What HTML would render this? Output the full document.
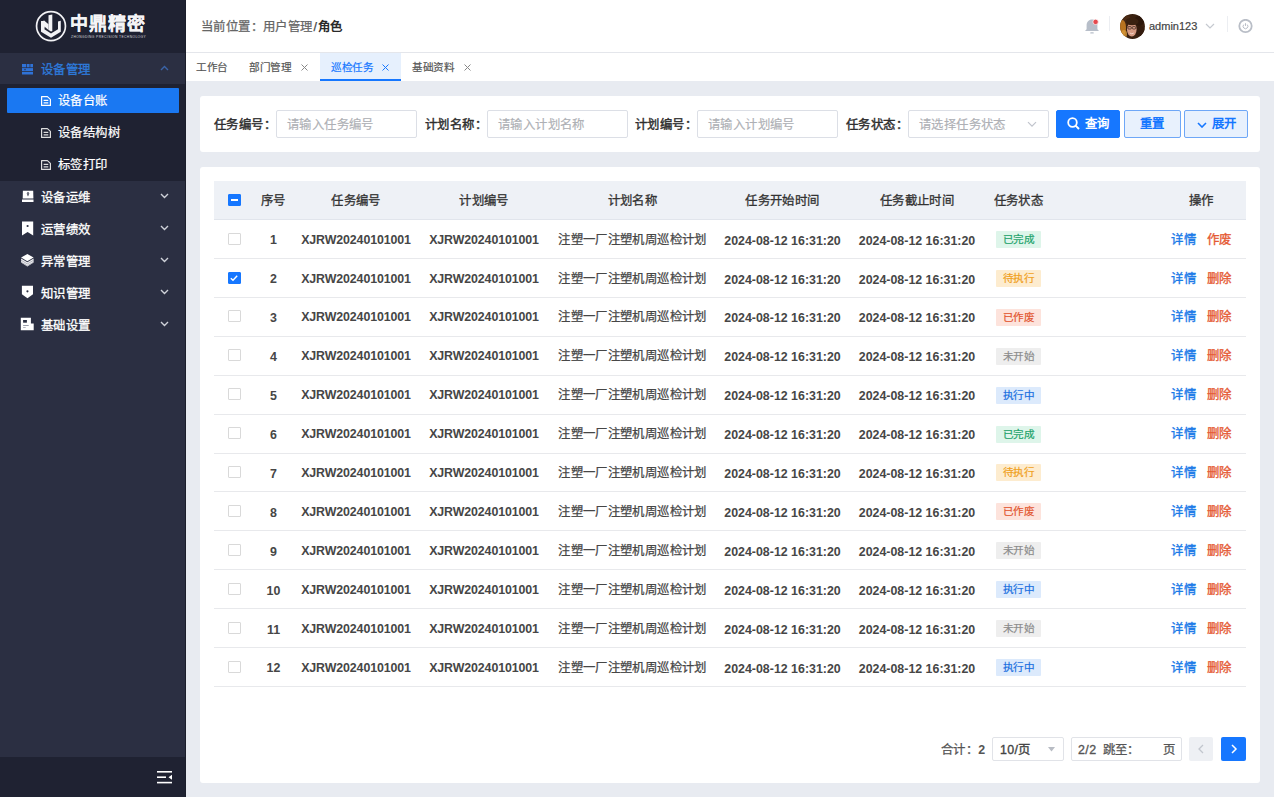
<!DOCTYPE html>
<html lang="zh-CN">
<head>
<meta charset="utf-8">
<style>
*{margin:0;padding:0;box-sizing:border-box}
html,body{width:1274px;height:797px;overflow:hidden;background:#e8ebf1;font-family:"Liberation Sans",sans-serif;font-size:12.4px;color:#333}
.ls{letter-spacing:0.38px}
.abs{position:absolute}
.med{-webkit-text-stroke:0.25px currentColor}
#side{position:absolute;left:0;top:0;width:186px;height:797px;background:#2b2f42}
#logo{position:absolute;left:0;top:0;width:186px;height:53px;background:#1f2232}
#sub{position:absolute;left:0;top:84px;width:186px;height:97px;background:#1f2232}
#sbot{position:absolute;left:0;top:757px;width:186px;height:40px;background:#1f2232}
.mi{position:absolute;left:0;width:186px;height:32px;line-height:32px;color:#fff;font-size:12.4px}
.mi .t{position:absolute;left:41px;top:1px;letter-spacing:0.38px;-webkit-text-stroke:0.3px currentColor}
.mi .ic{position:absolute;left:21px;top:10px;width:12px;height:12px}
.mi .ch{position:absolute;left:160px;top:12px;width:9px;height:6px}
.si{position:absolute;left:0;width:186px;height:25px;line-height:25px;color:#fff}
.si .t{position:absolute;left:58px;top:1px;letter-spacing:0.38px;-webkit-text-stroke:0.2px currentColor}
.si .ic{position:absolute;left:41px;top:8px;width:10px;height:10px}
#hdr{position:absolute;left:186px;top:0;width:1088px;height:53px;background:#fff;border-bottom:1px solid #e4e6eb}
#tabs{position:absolute;left:186px;top:53px;width:1088px;height:28px;background:#fff}
.tab{position:absolute;top:1px;height:27px;line-height:27px;font-size:10.6px;letter-spacing:-0.4px;color:#555;-webkit-text-stroke:0.2px currentColor;white-space:nowrap}
.card{position:absolute;background:#fff;border-radius:3px}
.lbl{position:absolute;top:111px;letter-spacing:0.38px;height:28px;line-height:28px;font-weight:400;color:#2e2e2e;-webkit-text-stroke:0.4px currentColor}
.inp{position:absolute;top:110px;letter-spacing:0.38px;height:28px;width:141px;border:1px solid #dcdfe6;border-radius:2px;line-height:28px;padding-left:10px;color:#aeb0b5;background:#fff;-webkit-text-stroke:0.15px currentColor}
.btn{position:absolute;top:110px;letter-spacing:0.38px;height:28px;border-radius:2px;line-height:27px;text-align:center;font-weight:700}
#thead{position:absolute;left:214px;top:181px;width:1032px;height:39px;background:#eef1f6;border-bottom:1px solid #e1e5ec}
.row{position:absolute;left:214px;width:1032px;height:38px}
.c{position:absolute;width:240px;text-align:center;white-space:nowrap}
.hc{line-height:38px;letter-spacing:0.38px;color:#333;-webkit-text-stroke:0.3px currentColor}
.rc{line-height:38px;font-weight:700;color:#464646}
.ck,.ind{background:#1677ff!important;border-color:#1677ff!important}
.cb{position:absolute;left:14px;top:13px;width:13px;height:12px;border:1px solid #d9d9d9;border-radius:1px;background:#fff}
.tag{display:inline-block;position:relative;top:-1px;letter-spacing:-0.4px;height:17px;line-height:17px;width:45px;font-size:10.6px;font-weight:400;border-radius:1px;vertical-align:middle;-webkit-text-stroke:0.2px currentColor}
.g{color:#23a36b;background:#def5ea}
.o{color:#f0a020;background:#fdeccf}
.r{color:#e2552f;background:#fde3dc}
.n{color:#8c8c8c;background:#eeeeee}
.b{color:#1a6fe0;background:#dceafc}
.op{font-weight:400;letter-spacing:0.38px;-webkit-text-stroke:0.35px currentColor}
.op .d{color:#1a7ae8}
.op .del{color:#e55a34;margin-left:11px}
</style>
</head>
<body>

<div id="side">
  <div id="logo">
    <svg class="abs" style="left:34px;top:9px" width="35" height="35" viewBox="0 0 35 35">
      <circle cx="17" cy="17.1" r="14.45" fill="none" stroke="#f2f2f5" stroke-width="1.7"/>
      <path d="M7 12.3 L10.4 11.7 L10.4 20.2 L17 24.4 L24 20.2 L24 12.4 L26.8 11.8 L26.8 22.8 L17 28.8 L7 22.8 Z" fill="#f2f2f5"/>
      <path d="M14.5 6.2 L18.3 5.6 L18.3 21.9 L17 22.4 L14.5 21 Z" fill="#f2f2f5"/>
      <path d="M7 12.3 L10.4 11.7 L14.5 15.2 L14.5 21 L10.4 17.5 L10.4 19.5 L7 19.5 Z" fill="#f2f2f5"/>
    </svg>
    <div class="abs" style="left:70px;top:13px;font-size:18px;font-weight:900;color:#f4f4f6;line-height:22px;letter-spacing:1px;-webkit-text-stroke:0.15px #f4f4f6">中鼎精密</div>
    <div class="abs" style="left:71px;top:35px;font-size:3.3px;color:#d8d8de;line-height:4px;letter-spacing:0.4px;white-space:nowrap">ZHONGDING PRECISION TECHNOLOGY</div>
  </div>
  <div class="mi" style="top:53px;color:#2e7bdc">
    <svg class="ic" style="left:22px;top:11px;width:11px;height:11px" viewBox="0 0 11 11"><g fill="#2f72d6"><rect x="0" y="0" width="4.3" height="3.3"/><rect x="5" y="0" width="2.6" height="3.3"/><rect x="8.3" y="0" width="2.7" height="3.3"/><rect x="0" y="4.1" width="11" height="3"/><rect x="0" y="7.9" width="11" height="2.6"/></g><circle cx="3" cy="5.6" r="0.8" fill="#1f3a66"/></svg>
    <span class="t">设备管理</span>
    <svg class="ch" style="top:12px" viewBox="0 0 9 6"><path d="M1 5 L4.5 1.5 L8 5" fill="none" stroke="#3a64a8" stroke-width="1.4"/></svg>
  </div>
  <div id="sub"></div>
  <div class="abs" style="left:7px;top:88px;width:172px;height:25px;background:#1a78f2;border-radius:1px"></div>
  <div class="si" style="top:88px"><svg class="ic" viewBox="0 0 10 10"><path d="M0.6 0.6 H6.4 L9.4 3.4 V9.4 H0.6 Z" fill="none" stroke="#fff" stroke-width="1.2" stroke-linejoin="round"/><path d="M2.6 4.3 H7.3 M2.6 6.9 H7.3" stroke="#fff" stroke-width="1.3"/></svg><span class="t">设备台账</span></div>
  <div class="si" style="top:120px"><svg class="ic" viewBox="0 0 10 10"><path d="M0.6 0.6 H6.4 L9.4 3.4 V9.4 H0.6 Z" fill="none" stroke="#ddd" stroke-width="1.2" stroke-linejoin="round"/><path d="M2.6 4.3 H7.3 M2.6 6.9 H7.3" stroke="#ddd" stroke-width="1.3"/></svg><span class="t">设备结构树</span></div>
  <div class="si" style="top:152px"><svg class="ic" viewBox="0 0 10 10"><path d="M0.6 0.6 H6.4 L9.4 3.4 V9.4 H0.6 Z" fill="none" stroke="#ddd" stroke-width="1.2" stroke-linejoin="round"/><path d="M2.6 4.3 H7.3 M2.6 6.9 H7.3" stroke="#ddd" stroke-width="1.3"/></svg><span class="t">标签打印</span></div>
  <div class="mi" style="top:181px">
    <svg class="abs" style="left:21px;top:8px" width="14" height="15" viewBox="0 0 14 15"><path d="M1.9 1.7 H12.2 L12.4 9.5 H1.7 Z" fill="#fff"/><rect x="1" y="10.5" width="11.5" height="2.5" fill="#fff"/><path d="M7 2.8 L8.3 4.6 L7 7.6 L5.7 4.6 Z" fill="#2b2f42"/><circle cx="7" cy="4.8" r="0.6" fill="#fff"/></svg>
    <span class="t">设备运维</span><svg class="ch" viewBox="0 0 9 6"><path d="M1 1 L4.5 4.5 L8 1" fill="none" stroke="#cfd2d9" stroke-width="1.4"/></svg>
  </div>
  <div class="mi" style="top:213px">
    <svg class="abs" style="left:21px;top:7px" width="14" height="17" viewBox="0 0 14 17"><path d="M1 1.4 H12.2 V15.5 L6.6 12 L1 15.5 Z" fill="#fff"/><circle cx="6.6" cy="6" r="1.1" fill="#2b2f42"/></svg>
    <span class="t">运营绩效</span><svg class="ch" viewBox="0 0 9 6"><path d="M1 1 L4.5 4.5 L8 1" fill="none" stroke="#cfd2d9" stroke-width="1.4"/></svg>
  </div>
  <div class="mi" style="top:245px">
    <svg class="abs" style="left:20px;top:8px" width="15" height="15" viewBox="0 0 15 15"><path d="M7.35 1 L13.6 4.6 L7.35 8.2 L1.1 4.6 Z" fill="#fff"/><path d="M1.1 5.6 L7.35 9.2 L13.6 5.6 L13.6 9.6 L7.35 13.6 L1.1 9.6 Z" fill="#f0f0f3"/><path d="M1.1 7.3 L7.35 10.9 L13.6 7.3" fill="none" stroke="#8a8d99" stroke-width="0.6"/><path d="M1.1 9.2 L7.35 12.8 L13.6 9.2" fill="none" stroke="#8a8d99" stroke-width="0.6"/></svg>
    <span class="t">异常管理</span><svg class="ch" viewBox="0 0 9 6"><path d="M1 1 L4.5 4.5 L8 1" fill="none" stroke="#cfd2d9" stroke-width="1.4"/></svg>
  </div>
  <div class="mi" style="top:277px">
    <svg class="abs" style="left:21px;top:7px" width="13" height="16" viewBox="0 0 13 16"><path d="M0.9 1.7 H12 V10.2 L6.45 14.3 L0.9 10.2 Z" fill="#fff"/><circle cx="6.45" cy="7.3" r="1.1" fill="#2b2f42"/></svg>
    <span class="t">知识管理</span><svg class="ch" viewBox="0 0 9 6"><path d="M1 1 L4.5 4.5 L8 1" fill="none" stroke="#cfd2d9" stroke-width="1.4"/></svg>
  </div>
  <div class="mi" style="top:309px">
    <svg class="abs" style="left:20px;top:8px" width="15" height="15" viewBox="0 0 15 15"><path d="M0.8 0.8 H10.9 V6.5 H13.7 V13.3 H0.8 Z" fill="#fff"/><rect x="3.1" y="3" width="3.8" height="2.7" fill="#2b2f42"/><rect x="3.1" y="8" width="5.6" height="1" fill="#9a9daa"/><rect x="3.1" y="10" width="2.6" height="1" fill="#b5b8c2"/></svg>
    <span class="t">基础设置</span><svg class="ch" viewBox="0 0 9 6"><path d="M1 1 L4.5 4.5 L8 1" fill="none" stroke="#cfd2d9" stroke-width="1.4"/></svg>
  </div>
  <div id="sbot">
    <svg class="abs" style="left:157px;top:14px" width="16" height="13" viewBox="0 0 16 13">
      <rect x="0" y="0" width="15" height="1.6" fill="#fff"/>
      <rect x="0" y="5.4" width="9" height="1.6" fill="#fff"/>
      <path d="M15 3.7 L11.5 6.2 L15 8.7 Z" fill="#fff"/>
      <rect x="0" y="10.8" width="15" height="1.6" fill="#fff"/>
    </svg>
  </div>
  <div class="abs" style="left:185px;top:0;width:1px;height:797px;background:#1b1e2b"></div>
</div>


<div id="hdr">
  <div class="abs med ls" style="left:15px;top:18px;line-height:18px;color:#666;font-size:12.4px">当前位置：用户管理<span style="color:#444;padding:0 0.5px 0 1px">/</span><b style="color:#2a2a2a;font-weight:700;-webkit-text-stroke:0">角色</b></div>
  <svg class="abs" style="left:898px;top:18px" width="16" height="17" viewBox="0 0 16 17">
    <path d="M1 13 L2.6 11.2 L2.6 7.4 C2.6 4 4.8 1.6 8 1.6 C11.2 1.6 13.4 4 13.4 7.4 L13.4 11.2 L15 13 Z" fill="#b7bec9"/>
    <rect x="6.2" y="14.2" width="3.6" height="1.4" rx="0.7" fill="#b7bec9"/>
    <circle cx="11.6" cy="3.9" r="2.7" fill="#e5484d" stroke="#fff" stroke-width="0.7"/>
  </svg>
  <div class="abs" style="left:923px;top:16px;width:1px;height:15px;background:#eceef2"></div>
  <svg class="abs" style="left:934px;top:14px" width="25" height="25" viewBox="0 0 25 25">
    <defs><clipPath id="av"><circle cx="12.5" cy="12.5" r="12.4"/></clipPath></defs>
    <g clip-path="url(#av)">
      <rect width="25" height="25" fill="#3a2110"/>
      <circle cx="6" cy="6" r="5" fill="#4a2a14"/>
      <circle cx="19" cy="7" r="5" fill="#2c170b"/>
      <circle cx="20" cy="17" r="5" fill="#341c0e"/>
      <ellipse cx="2.5" cy="14" rx="3.5" ry="8" fill="#b8731f"/>
      <ellipse cx="4" cy="20" rx="3" ry="4" fill="#d99a3a" opacity="0.8"/>
      <ellipse cx="11.8" cy="15.5" rx="4.8" ry="7" fill="#d69a82"/>
      <ellipse cx="12" cy="7.5" rx="6.5" ry="3.8" fill="#3a2110"/>
      <rect x="7.9" y="12.6" width="3.4" height="2.4" rx="0.8" fill="none" stroke="#3b2a22" stroke-width="0.8"/>
      <rect x="12.3" y="12.6" width="3.4" height="2.4" rx="0.8" fill="none" stroke="#3b2a22" stroke-width="0.8"/>
      <path d="M9.8 19 Q11.8 20.6 13.8 19" fill="none" stroke="#f3d5c8" stroke-width="1"/>
    </g>
  </svg>
  <div class="abs" style="left:963px;top:18px;font-size:11px;line-height:16px;color:#444;-webkit-text-stroke:0.2px #444">admin123</div>
  <svg class="abs" style="left:1019px;top:23px" width="10" height="6" viewBox="0 0 10 6"><path d="M1 1 L5 5 L9 1" fill="none" stroke="#c5c9d0" stroke-width="1.2"/></svg>
  <div class="abs" style="left:1041px;top:16px;width:1px;height:16px;background:#eceef2"></div>
  <svg class="abs" style="left:1052px;top:19px" width="15" height="15" viewBox="0 0 15 15">
    <circle cx="7.5" cy="7" r="6.2" fill="none" stroke="#b9bec7" stroke-width="1.8"/>
    <path d="M5.8 5.6 A2.4 2.4 0 1 0 9.2 5.6" fill="none" stroke="#b9bec7" stroke-width="1"/>
    <path d="M7.5 4.2 V6.9" stroke="#b9bec7" stroke-width="1"/>
  </svg>
</div>
<div id="tabs">
  <div class="tab" style="left:10px">工作台</div>
  <div class="tab" style="left:63px">部门管理</div>
  <div class="abs" style="left:115px;top:11px"><svg width="7" height="7" viewBox="0 0 7 7" style="display:block"><path d="M0.5 0.5 L6.5 6.5 M6.5 0.5 L0.5 6.5" stroke="#888" stroke-width="1"/></svg></div>
  <div class="abs" style="left:134px;top:0;width:81px;height:28px;background:#e6f0fd;border-bottom:2px solid #1677ff"></div>
  <div class="tab" style="left:145px;color:#1677ff">巡检任务</div>
  <div class="abs" style="left:196px;top:11px"><svg width="7" height="7" viewBox="0 0 7 7" style="display:block"><path d="M0.5 0.5 L6.5 6.5 M6.5 0.5 L0.5 6.5" stroke="#1677ff" stroke-width="1"/></svg></div>
  <div class="tab" style="left:226px">基础资料</div>
  <div class="abs" style="left:278px;top:11px"><svg width="7" height="7" viewBox="0 0 7 7" style="display:block"><path d="M0.5 0.5 L6.5 6.5 M6.5 0.5 L0.5 6.5" stroke="#888" stroke-width="1"/></svg></div>
</div>


<div class="card" style="left:200px;top:96px;width:1060px;height:56px"></div>
<div class="card" style="left:200px;top:167px;width:1060px;height:616px"></div>
<div class="lbl" style="left:214px">任务编号：</div>
<div class="inp" style="left:276px">请输入任务编号</div>
<div class="lbl" style="left:425px">计划名称：</div>
<div class="inp" style="left:487px">请输入计划名称</div>
<div class="lbl" style="left:635px">计划编号：</div>
<div class="inp" style="left:697px">请输入计划编号</div>
<div class="lbl" style="left:846px">任务状态：</div>
<div class="inp" style="left:908px">请选择任务状态<svg class="abs" style="left:118px;top:10px" width="10" height="7" viewBox="0 0 10 7"><path d="M1 1.2 L5 5.2 L9 1.2" fill="none" stroke="#c0c4cc" stroke-width="1.2"/></svg></div>
<div class="btn" style="left:1056px;width:64px;background:#1677ff;border:1px solid #1677ff;color:#fff">
  <svg class="abs" style="left:10px;top:6px" width="13" height="13" viewBox="0 0 13 13"><circle cx="5.5" cy="5.5" r="4.3" fill="none" stroke="#fff" stroke-width="1.8"/><path d="M8.6 8.6 L12 12" stroke="#fff" stroke-width="1.9"/></svg>
  <span class="abs" style="left:28px;top:0">查询</span>
</div>
<div class="btn" style="left:1124px;width:57px;background:#e8f1fd;border:1px solid #6ea7f7;color:#1677ff">重置</div>
<div class="btn" style="left:1184px;width:64px;background:#e8f1fd;border:1px solid #6ea7f7;color:#1677ff">
  <svg class="abs" style="left:12px;top:11px" width="10" height="6" viewBox="0 0 10 6"><path d="M1 1 L5 5 L9 1" fill="none" stroke="#1677ff" stroke-width="1.6"/></svg>
  <span class="abs" style="left:27px;top:0">展开</span>
</div>

<div id="thead">
  <div class="cb ind" style="top:13px"><div class="abs" style="left:2px;top:4px;width:7px;height:2px;background:#fff"></div></div>
  <div class="c hc" style="left:-60.5px;top:1px">序号</div>
  <div class="c hc" style="left:22px;top:1px">任务编号</div>
  <div class="c hc" style="left:150px;top:1px">计划编号</div>
  <div class="c hc" style="left:298.5px;top:1px">计划名称</div>
  <div class="c hc" style="left:448.5px;top:1px">任务开始时间</div>
  <div class="c hc" style="left:583px;top:1px">任务截止时间</div>
  <div class="c hc" style="left:684.5px;top:1px">任务状态</div>
  <div class="c hc" style="left:867.5px;top:1px">操作</div>
</div>

<div class="row" style="top:219.6px"><div class="cb"></div><div class="c rc" style="left:-60.5px;top:1px"><span style="position:relative;top:0.5px">1</span></div><div class="c rc" style="left:22px;top:1px"><span style="letter-spacing:-0.12px">XJRW20240101001</span></div><div class="c rc" style="left:150px;top:1px"><span style="letter-spacing:-0.12px">XJRW20240101001</span></div><div class="c rc" style="left:298.5px;top:1px"><span class="med ls" style="font-weight:400">注塑一厂注塑机周巡检计划</span></div><div class="c rc" style="left:448.5px;top:1px"><span style="position:relative;top:1px">2024-08-12 16:31:20</span></div><div class="c rc" style="left:583px;top:1px"><span style="position:relative;top:1px">2024-08-12 16:31:20</span></div><div class="c rc" style="left:684.5px;top:1px"><span class="tag g">已完成</span></div><div class="c rc" style="left:867.5px;top:1px"><span class="op"><span class="d">详情</span><span class="del">作废</span></span></div></div><div class="abs" style="left:214px;top:258px;width:1032px;height:1px;background:#e8e9ec"></div>
<div class="row" style="top:258.54px"><div class="cb ck"><svg width="12" height="12" viewBox="0 0 12 12" style="position:absolute;left:-1px;top:-1px"><path d="M2.8 6.2 L5 8.3 L9.2 3.8" fill="none" stroke="#fff" stroke-width="1.4"/></svg></div><div class="c rc" style="left:-60.5px;top:1px"><span style="position:relative;top:0.5px">2</span></div><div class="c rc" style="left:22px;top:1px"><span style="letter-spacing:-0.12px">XJRW20240101001</span></div><div class="c rc" style="left:150px;top:1px"><span style="letter-spacing:-0.12px">XJRW20240101001</span></div><div class="c rc" style="left:298.5px;top:1px"><span class="med ls" style="font-weight:400">注塑一厂注塑机周巡检计划</span></div><div class="c rc" style="left:448.5px;top:1px"><span style="position:relative;top:1px">2024-08-12 16:31:20</span></div><div class="c rc" style="left:583px;top:1px"><span style="position:relative;top:1px">2024-08-12 16:31:20</span></div><div class="c rc" style="left:684.5px;top:1px"><span class="tag o">待执行</span></div><div class="c rc" style="left:867.5px;top:1px"><span class="op"><span class="d">详情</span><span class="del">删除</span></span></div></div><div class="abs" style="left:214px;top:297px;width:1032px;height:1px;background:#e8e9ec"></div>
<div class="row" style="top:297.48px"><div class="cb"></div><div class="c rc" style="left:-60.5px;top:1px"><span style="position:relative;top:0.5px">3</span></div><div class="c rc" style="left:22px;top:1px"><span style="letter-spacing:-0.12px">XJRW20240101001</span></div><div class="c rc" style="left:150px;top:1px"><span style="letter-spacing:-0.12px">XJRW20240101001</span></div><div class="c rc" style="left:298.5px;top:1px"><span class="med ls" style="font-weight:400">注塑一厂注塑机周巡检计划</span></div><div class="c rc" style="left:448.5px;top:1px"><span style="position:relative;top:1px">2024-08-12 16:31:20</span></div><div class="c rc" style="left:583px;top:1px"><span style="position:relative;top:1px">2024-08-12 16:31:20</span></div><div class="c rc" style="left:684.5px;top:1px"><span class="tag r">已作废</span></div><div class="c rc" style="left:867.5px;top:1px"><span class="op"><span class="d">详情</span><span class="del">删除</span></span></div></div><div class="abs" style="left:214px;top:336px;width:1032px;height:1px;background:#e8e9ec"></div>
<div class="row" style="top:336.42px"><div class="cb"></div><div class="c rc" style="left:-60.5px;top:1px"><span style="position:relative;top:0.5px">4</span></div><div class="c rc" style="left:22px;top:1px"><span style="letter-spacing:-0.12px">XJRW20240101001</span></div><div class="c rc" style="left:150px;top:1px"><span style="letter-spacing:-0.12px">XJRW20240101001</span></div><div class="c rc" style="left:298.5px;top:1px"><span class="med ls" style="font-weight:400">注塑一厂注塑机周巡检计划</span></div><div class="c rc" style="left:448.5px;top:1px"><span style="position:relative;top:1px">2024-08-12 16:31:20</span></div><div class="c rc" style="left:583px;top:1px"><span style="position:relative;top:1px">2024-08-12 16:31:20</span></div><div class="c rc" style="left:684.5px;top:1px"><span class="tag n">未开始</span></div><div class="c rc" style="left:867.5px;top:1px"><span class="op"><span class="d">详情</span><span class="del">删除</span></span></div></div><div class="abs" style="left:214px;top:375px;width:1032px;height:1px;background:#e8e9ec"></div>
<div class="row" style="top:375.36px"><div class="cb"></div><div class="c rc" style="left:-60.5px;top:1px"><span style="position:relative;top:0.5px">5</span></div><div class="c rc" style="left:22px;top:1px"><span style="letter-spacing:-0.12px">XJRW20240101001</span></div><div class="c rc" style="left:150px;top:1px"><span style="letter-spacing:-0.12px">XJRW20240101001</span></div><div class="c rc" style="left:298.5px;top:1px"><span class="med ls" style="font-weight:400">注塑一厂注塑机周巡检计划</span></div><div class="c rc" style="left:448.5px;top:1px"><span style="position:relative;top:1px">2024-08-12 16:31:20</span></div><div class="c rc" style="left:583px;top:1px"><span style="position:relative;top:1px">2024-08-12 16:31:20</span></div><div class="c rc" style="left:684.5px;top:1px"><span class="tag b">执行中</span></div><div class="c rc" style="left:867.5px;top:1px"><span class="op"><span class="d">详情</span><span class="del">删除</span></span></div></div><div class="abs" style="left:214px;top:414px;width:1032px;height:1px;background:#e8e9ec"></div>
<div class="row" style="top:414.3px"><div class="cb"></div><div class="c rc" style="left:-60.5px;top:1px"><span style="position:relative;top:0.5px">6</span></div><div class="c rc" style="left:22px;top:1px"><span style="letter-spacing:-0.12px">XJRW20240101001</span></div><div class="c rc" style="left:150px;top:1px"><span style="letter-spacing:-0.12px">XJRW20240101001</span></div><div class="c rc" style="left:298.5px;top:1px"><span class="med ls" style="font-weight:400">注塑一厂注塑机周巡检计划</span></div><div class="c rc" style="left:448.5px;top:1px"><span style="position:relative;top:1px">2024-08-12 16:31:20</span></div><div class="c rc" style="left:583px;top:1px"><span style="position:relative;top:1px">2024-08-12 16:31:20</span></div><div class="c rc" style="left:684.5px;top:1px"><span class="tag g">已完成</span></div><div class="c rc" style="left:867.5px;top:1px"><span class="op"><span class="d">详情</span><span class="del">删除</span></span></div></div><div class="abs" style="left:214px;top:453px;width:1032px;height:1px;background:#e8e9ec"></div>
<div class="row" style="top:453.24px"><div class="cb"></div><div class="c rc" style="left:-60.5px;top:1px"><span style="position:relative;top:0.5px">7</span></div><div class="c rc" style="left:22px;top:1px"><span style="letter-spacing:-0.12px">XJRW20240101001</span></div><div class="c rc" style="left:150px;top:1px"><span style="letter-spacing:-0.12px">XJRW20240101001</span></div><div class="c rc" style="left:298.5px;top:1px"><span class="med ls" style="font-weight:400">注塑一厂注塑机周巡检计划</span></div><div class="c rc" style="left:448.5px;top:1px"><span style="position:relative;top:1px">2024-08-12 16:31:20</span></div><div class="c rc" style="left:583px;top:1px"><span style="position:relative;top:1px">2024-08-12 16:31:20</span></div><div class="c rc" style="left:684.5px;top:1px"><span class="tag o">待执行</span></div><div class="c rc" style="left:867.5px;top:1px"><span class="op"><span class="d">详情</span><span class="del">删除</span></span></div></div><div class="abs" style="left:214px;top:491px;width:1032px;height:1px;background:#e8e9ec"></div>
<div class="row" style="top:492.18px"><div class="cb"></div><div class="c rc" style="left:-60.5px;top:1px"><span style="position:relative;top:0.5px">8</span></div><div class="c rc" style="left:22px;top:1px"><span style="letter-spacing:-0.12px">XJRW20240101001</span></div><div class="c rc" style="left:150px;top:1px"><span style="letter-spacing:-0.12px">XJRW20240101001</span></div><div class="c rc" style="left:298.5px;top:1px"><span class="med ls" style="font-weight:400">注塑一厂注塑机周巡检计划</span></div><div class="c rc" style="left:448.5px;top:1px"><span style="position:relative;top:1px">2024-08-12 16:31:20</span></div><div class="c rc" style="left:583px;top:1px"><span style="position:relative;top:1px">2024-08-12 16:31:20</span></div><div class="c rc" style="left:684.5px;top:1px"><span class="tag r">已作废</span></div><div class="c rc" style="left:867.5px;top:1px"><span class="op"><span class="d">详情</span><span class="del">删除</span></span></div></div><div class="abs" style="left:214px;top:530px;width:1032px;height:1px;background:#e8e9ec"></div>
<div class="row" style="top:531.12px"><div class="cb"></div><div class="c rc" style="left:-60.5px;top:1px"><span style="position:relative;top:0.5px">9</span></div><div class="c rc" style="left:22px;top:1px"><span style="letter-spacing:-0.12px">XJRW20240101001</span></div><div class="c rc" style="left:150px;top:1px"><span style="letter-spacing:-0.12px">XJRW20240101001</span></div><div class="c rc" style="left:298.5px;top:1px"><span class="med ls" style="font-weight:400">注塑一厂注塑机周巡检计划</span></div><div class="c rc" style="left:448.5px;top:1px"><span style="position:relative;top:1px">2024-08-12 16:31:20</span></div><div class="c rc" style="left:583px;top:1px"><span style="position:relative;top:1px">2024-08-12 16:31:20</span></div><div class="c rc" style="left:684.5px;top:1px"><span class="tag n">未开始</span></div><div class="c rc" style="left:867.5px;top:1px"><span class="op"><span class="d">详情</span><span class="del">删除</span></span></div></div><div class="abs" style="left:214px;top:569px;width:1032px;height:1px;background:#e8e9ec"></div>
<div class="row" style="top:570.06px"><div class="cb"></div><div class="c rc" style="left:-60.5px;top:1px"><span style="position:relative;top:0.5px">10</span></div><div class="c rc" style="left:22px;top:1px"><span style="letter-spacing:-0.12px">XJRW20240101001</span></div><div class="c rc" style="left:150px;top:1px"><span style="letter-spacing:-0.12px">XJRW20240101001</span></div><div class="c rc" style="left:298.5px;top:1px"><span class="med ls" style="font-weight:400">注塑一厂注塑机周巡检计划</span></div><div class="c rc" style="left:448.5px;top:1px"><span style="position:relative;top:1px">2024-08-12 16:31:20</span></div><div class="c rc" style="left:583px;top:1px"><span style="position:relative;top:1px">2024-08-12 16:31:20</span></div><div class="c rc" style="left:684.5px;top:1px"><span class="tag b">执行中</span></div><div class="c rc" style="left:867.5px;top:1px"><span class="op"><span class="d">详情</span><span class="del">删除</span></span></div></div><div class="abs" style="left:214px;top:608px;width:1032px;height:1px;background:#e8e9ec"></div>
<div class="row" style="top:609.0px"><div class="cb"></div><div class="c rc" style="left:-60.5px;top:1px"><span style="position:relative;top:0.5px">11</span></div><div class="c rc" style="left:22px;top:1px"><span style="letter-spacing:-0.12px">XJRW20240101001</span></div><div class="c rc" style="left:150px;top:1px"><span style="letter-spacing:-0.12px">XJRW20240101001</span></div><div class="c rc" style="left:298.5px;top:1px"><span class="med ls" style="font-weight:400">注塑一厂注塑机周巡检计划</span></div><div class="c rc" style="left:448.5px;top:1px"><span style="position:relative;top:1px">2024-08-12 16:31:20</span></div><div class="c rc" style="left:583px;top:1px"><span style="position:relative;top:1px">2024-08-12 16:31:20</span></div><div class="c rc" style="left:684.5px;top:1px"><span class="tag n">未开始</span></div><div class="c rc" style="left:867.5px;top:1px"><span class="op"><span class="d">详情</span><span class="del">删除</span></span></div></div><div class="abs" style="left:214px;top:647px;width:1032px;height:1px;background:#e8e9ec"></div>
<div class="row" style="top:647.94px"><div class="cb"></div><div class="c rc" style="left:-60.5px;top:1px"><span style="position:relative;top:0.5px">12</span></div><div class="c rc" style="left:22px;top:1px"><span style="letter-spacing:-0.12px">XJRW20240101001</span></div><div class="c rc" style="left:150px;top:1px"><span style="letter-spacing:-0.12px">XJRW20240101001</span></div><div class="c rc" style="left:298.5px;top:1px"><span class="med ls" style="font-weight:400">注塑一厂注塑机周巡检计划</span></div><div class="c rc" style="left:448.5px;top:1px"><span style="position:relative;top:1px">2024-08-12 16:31:20</span></div><div class="c rc" style="left:583px;top:1px"><span style="position:relative;top:1px">2024-08-12 16:31:20</span></div><div class="c rc" style="left:684.5px;top:1px"><span class="tag b">执行中</span></div><div class="c rc" style="left:867.5px;top:1px"><span class="op"><span class="d">详情</span><span class="del">删除</span></span></div></div><div class="abs" style="left:214px;top:686px;width:1032px;height:1px;background:#e8e9ec"></div>

<div class="abs med ls" style="left:941px;top:738px;line-height:24px;color:#555;font-size:12.4px">合计：<b style="font-weight:700;-webkit-text-stroke:0">2</b></div>
<div class="abs" style="left:992px;top:737px;width:72px;height:24px;border:1px solid #e1e3e8;border-radius:2px;line-height:25px;padding-left:7px;color:#444;-webkit-text-stroke:0.35px #444;letter-spacing:0.3px">10/页
  <svg class="abs" style="left:55px;top:9px" width="7" height="5" viewBox="0 0 7 5"><path d="M0 0 H7 L3.5 4.5 Z" fill="#b8bcc4"/></svg></div>
<div class="abs" style="left:1071px;top:737px;width:111px;height:24px;border:1px solid #e1e3e8;border-radius:2px;line-height:25px;padding-left:6px;color:#555;white-space:nowrap"><span style="-webkit-text-stroke:0.35px currentColor;letter-spacing:0.4px">2/2</span>&nbsp; <span class="med">跳至：</span><span class="abs med" style="left:91px;top:0">页</span></div>
<div class="abs" style="left:1189px;top:737px;width:24px;height:24px;border-radius:2px;background:#eef0f4">
  <svg class="abs" style="left:8px;top:7px" width="8" height="10" viewBox="0 0 8 10"><path d="M6 1 L2 5 L6 9" fill="none" stroke="#c2c6ce" stroke-width="1.3"/></svg></div>
<div class="abs" style="left:1221px;top:737px;width:25px;height:24px;border-radius:2px;background:#1677ff">
  <svg class="abs" style="left:9px;top:7px" width="8" height="10" viewBox="0 0 8 10"><path d="M2 1 L6 5 L2 9" fill="none" stroke="#fff" stroke-width="1.5"/></svg></div>

</body>
</html>
